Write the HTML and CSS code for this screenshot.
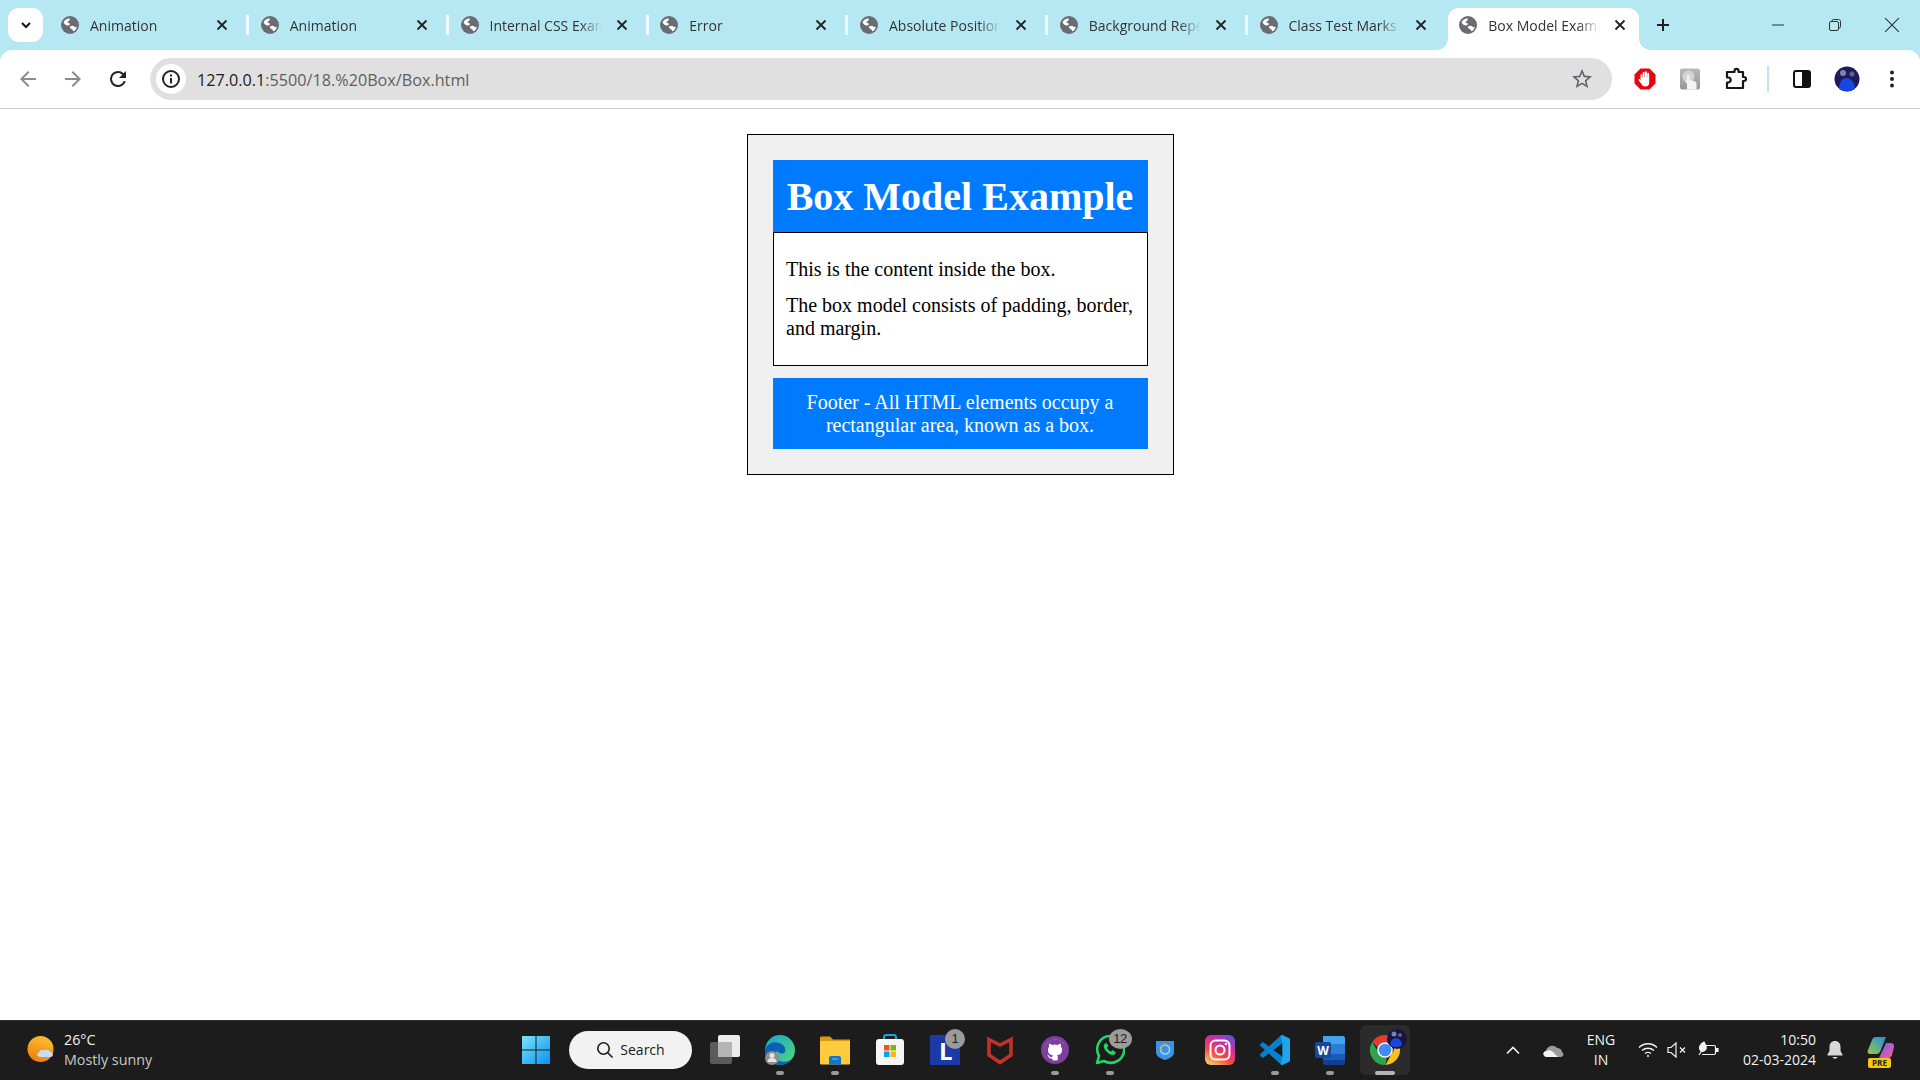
FILE: index.html
```html
<!DOCTYPE html>
<html>
<head>
  <title>Box Model Example</title>
  <link rel="stylesheet" href="styles.css">
</head>
<body>
  <svg class="defs">
    <symbol id="globe" viewBox="0 0 18 18">
      <circle cx="9" cy="9" r="9" fill="#696c70"/>
      <path d="M2.500 6.500C3.500 4 6 2.500 8.500 2.200 9 3.500 8.500 5 7 5.500 6 6 6.500 7 7.500 7c1.500 0 2 1.500 .5 2.200C6 10 4 9 2.500 6.500zM9 10.500c1.500-1.200 3.500-1 4.500.2 1 .8 1.800.3 2.300-.2-.2 2-1.300 3.800-3 4.800-1-.3-.8-1.500-1.800-2-1.200-.5-2.500-1.500-2-2.800z" fill="#fff"/>
    </symbol>
    <symbol id="close" viewBox="0 0 16 16">
      <path d="M3.500 3.500l9 9M12.500 3.500l-9 9"/>
    </symbol>
  </svg>

  <header class="browser">
    <div class="tabstrip">
      <button class="tab-search">
        <svg width="14" height="14" viewBox="0 0 14 14"><path d="M3 5l4 4 4-4" fill="none" stroke="#111" stroke-width="2"/></svg>
      </button>
      <div class="tabs">
        <div class="tab">
          <svg class="tab-icon"><use href="#globe"/></svg>
          <span class="tab-title">Animation</span>
          <svg class="tab-close"><use href="#close"/></svg>
        </div>
        <div class="tab">
          <svg class="tab-icon"><use href="#globe"/></svg>
          <span class="tab-title">Animation</span>
          <svg class="tab-close"><use href="#close"/></svg>
        </div>
        <div class="tab">
          <svg class="tab-icon"><use href="#globe"/></svg>
          <span class="tab-title">Internal CSS Example</span>
          <svg class="tab-close"><use href="#close"/></svg>
        </div>
        <div class="tab">
          <svg class="tab-icon"><use href="#globe"/></svg>
          <span class="tab-title">Error</span>
          <svg class="tab-close"><use href="#close"/></svg>
        </div>
        <div class="tab">
          <svg class="tab-icon"><use href="#globe"/></svg>
          <span class="tab-title">Absolute Positioning</span>
          <svg class="tab-close"><use href="#close"/></svg>
        </div>
        <div class="tab">
          <svg class="tab-icon"><use href="#globe"/></svg>
          <span class="tab-title">Background Repeat</span>
          <svg class="tab-close"><use href="#close"/></svg>
        </div>
        <div class="tab no-sep">
          <svg class="tab-icon"><use href="#globe"/></svg>
          <span class="tab-title">Class Test Marks</span>
          <svg class="tab-close"><use href="#close"/></svg>
        </div>
        <div class="tab active">
          <svg class="tab-icon"><use href="#globe"/></svg>
          <span class="tab-title">Box Model Example</span>
          <svg class="tab-close"><use href="#close"/></svg>
        </div>
      </div>
      <button class="new-tab">
        <svg width="16" height="16" viewBox="0 0 16 16"><path d="M8 2v12M2 8h12" stroke="#222" stroke-width="2"/></svg>
      </button>
      <div class="window-controls">
        <button class="win-btn"><svg width="14" height="14" viewBox="0 0 14 14"><path d="M1 7h12" stroke="#333" stroke-width="1"/></svg></button>
        <button class="win-btn"><svg width="14" height="14" viewBox="0 0 14 14" fill="none" stroke="#333"><rect x="1.500" y="3.500" width="9" height="9" rx="1.500"/><path d="M4 3.500V2.800c0-.7.500-1.300 1.300-1.300h5.400c1 0 1.800.8 1.800 1.800v5.400c0 .8-.6 1.300-1.300 1.300h-.7"/></svg></button>
        <button class="win-btn"><svg width="16" height="16" viewBox="0 0 14 14"><path d="M1 1l12 12M13 1L1 13" stroke="#333" stroke-width="1"/></svg></button>
      </div>
    </div>

    <div class="toolbar">
      <button class="tool-btn">
        <svg width="24" height="24" viewBox="0 0 24 24" fill="#8c8c8c"><path d="M20 11H7.830l5.590-5.590L12 4l-8 8 8 8 1.410-1.410L7.830 13H20v-2z"/></svg>
      </button>
      <button class="tool-btn">
        <svg width="24" height="24" viewBox="0 0 24 24" fill="#8c8c8c"><path d="M12 4l-1.410 1.410L16.170 11H4v2h12.170l-5.580 5.590L12 20l8-8z"/></svg>
      </button>
      <button class="tool-btn">
        <svg width="24" height="24" viewBox="0 0 24 24" fill="#222"><path d="M17.650 6.350A7.960 7.960 0 0 0 12 4a8 8 0 1 0 7.730 10h-2.080A6 6 0 1 1 12 6c1.660 0 3.140.690 4.220 1.780L13 11h7V4l-2.350 2.350z"/></svg>
      </button>
      <div class="omnibox">
        <span class="site-info">
          <svg width="20" height="20" viewBox="0 0 20 20"><circle cx="10" cy="10" r="8" fill="none" stroke="#222" stroke-width="2"/><path d="M10 9v5.500M10 5.500v2" stroke="#222" stroke-width="2"/></svg>
        </span>
        <span class="url"><span class="url-host">127.0.0.1</span>:5500/18.%20Box/Box.html</span>
        <svg class="star" width="24" height="24" viewBox="0 0 24 24" fill="#5f6368"><path d="M22 9.240l-7.190-.62L12 2 9.190 8.630 2 9.240l5.460 4.730L5.820 21 12 17.270 18.180 21l-1.630-7.030L22 9.240zM12 15.400l-3.760 2.270 1-4.280-3.320-2.880 4.380-.38L12 6.100l1.710 4.040 4.380.38-3.320 2.880 1 4.280L12 15.400z"/></svg>
      </div>
      <button class="tool-btn">
        <svg width="24" height="24" viewBox="0 0 24 24">
          <path d="M7.500 1.500h9l6 6v9l-6 6h-9l-6-6v-9z" fill="#e8060c"/>
          <path d="M8.500 11V8M10.700 11V5.800M13 11V5.200M15.200 11.500V6.800" stroke="#fff" stroke-width="1.900" stroke-linecap="round"/>
          <path d="M7.500 10.500h8.700v5c0 2.500-1.500 4-3.800 4-2 0-3-1-3.800-2.300L5.700 13.500c-.6-1.200.8-2 1.500-1l.6.800z" fill="#fff"/>
        </svg>
      </button>
      <button class="tool-btn">
        <svg width="24" height="24" viewBox="0 0 24 24">
          <defs><linearGradient id="gtile" x1="0" y1="0" x2="0" y2="1"><stop offset="0" stop-color="#b9b9b9"/><stop offset="1" stop-color="#979797"/></linearGradient></defs>
          <rect x="2" y="1.500" width="20" height="21" rx="2" fill="url(#gtile)"/>
          <circle cx="10.500" cy="9.500" r="6" fill="#d4d4d4"/>
          <path d="M9 22.500v-6l-1.500-1.500c-.8-1 .5-2 1.500-1V9c0-1.500 2.500-1.500 2.500 0v4l5 1.200c1.500.4 2 1.300 2 2.800v5.500z" fill="#f1f5f8"/>
        </svg>
      </button>
      <button class="tool-btn">
        <svg width="24" height="24" viewBox="0 0 24 24" fill="none" stroke="#161616" stroke-width="2.200" stroke-linejoin="round"><path d="M4 5h7.500V3.800a2 2 0 0 1 4 0V5H20v5h1a2 2 0 0 1 0 4h-1v7H4v-5.500h1.200a2.500 2.500 0 0 0 0-5H4z"/></svg>
      </button>
      <span class="tool-sep"></span>
      <button class="tool-btn">
        <svg width="24" height="24" viewBox="0 0 24 24"><rect x="4" y="4" width="16" height="16" rx="2" fill="none" stroke="#111" stroke-width="2"/><rect x="12" y="4" width="8" height="16" fill="#111"/></svg>
      </button>
      <button class="tool-btn">
        <svg width="26" height="26" viewBox="0 0 26 26"><circle cx="13" cy="13" r="12.500" fill="#1d1b5e"/><circle cx="9" cy="7" r="3" fill="#7d84b0"/><circle cx="18" cy="8" r="2.500" fill="#5c6290"/><path d="M5 23c0-6 3-11 7-11 5 0 9 5 9 11-4 3-12 3-16 0z" fill="#1746e0"/></svg>
      </button>
      <button class="tool-btn">
        <svg width="24" height="24" viewBox="0 0 24 24" fill="#222"><circle cx="12" cy="5.500" r="2"/><circle cx="12" cy="12" r="2"/><circle cx="12" cy="18.500" r="2"/></svg>
      </button>
    </div>
  </header>

  <main class="page">
    <div class="box">
      <div class="box-header"><h1>Box Model Example</h1></div>
      <div class="box-content">
        <p>This is the content inside the box.</p>
        <p>The box model consists of padding, border, and margin.</p>
      </div>
      <div class="box-footer">Footer - All HTML elements occupy a rectangular area, known as a box.</div>
    </div>
  </main>

  <footer class="taskbar">
    <div class="weather">
      <svg width="30" height="30" viewBox="0 0 30 30">
        <defs><linearGradient id="sun" x1="0.7" y1="0" x2="0.3" y2="1"><stop offset="0" stop-color="#fbc02d"/><stop offset="1" stop-color="#ee7d12"/></linearGradient></defs>
        <circle cx="13.500" cy="14" r="13" fill="url(#sun)"/>
        <path d="M13 22c-3 0-3.500-4-1-4.500.5-2.500 3.500-3.500 5.500-2 1-1.500 5-1 5.500 1.500 3.500 0 4 5 .5 5z" fill="#c9dcf5"/>
      </svg>
      <div class="weather-text">
        <span class="temp">26°C</span>
        <span class="sky">Mostly sunny</span>
      </div>
    </div>

    <button class="app start">
      <svg width="30" height="30" viewBox="0 0 30 30">
        <defs><linearGradient id="win" x1="0" y1="0" x2="1" y2="1"><stop offset="0" stop-color="#7ae5fb"/><stop offset="1" stop-color="#0b8ff2"/></linearGradient></defs>
        <path d="M1 1h13.500v13.500H1zM15.500 1H29v13.500H15.500zM1 15.500h13.500V29H1zM15.500 15.500H29V29H15.500z" fill="url(#win)"/>
      </svg>
    </button>
    <div class="search">
      <svg width="18" height="18" viewBox="0 0 18 18" fill="none" stroke="#1a1a1a" stroke-width="1.600"><circle cx="7.500" cy="7.500" r="5.700"/><path d="M11.500 11.500l5 5"/></svg>
      <span>Search</span>
    </div>

    <div class="apps">
      <button class="app">
        <svg width="32" height="32" viewBox="0 0 32 32"><rect x="1" y="8" width="22" height="22" rx="2" fill="#5b5b5b"/><rect x="9" y="1" width="22" height="22" rx="2" fill="#ececec"/><rect x="9" y="8" width="14" height="15" fill="#b5b5b5"/></svg>
      </button>
      <button class="app running">
        <svg width="32" height="32" viewBox="0 0 32 32">
          <defs><linearGradient id="edgetop" x1="0" y1="0" x2="1" y2="1"><stop offset="0" stop-color="#1aa0dc"/><stop offset="1" stop-color="#4fdc6d"/></linearGradient></defs>
          <circle cx="16" cy="16" r="15" fill="url(#edgetop)"/>
          <path d="M1 16c2-7 9-9 14-7 5 1 7 6 6 9-3 3-7 1-7-1-5 1-5 8 2 10 5 2 9 0 12-2-3 4-7 6-12 6-9 0-15-7-15-15z" fill="#0e5fb4"/>
          <circle cx="8" cy="24" r="7" fill="#8e8e8e"/><circle cx="8" cy="21.500" r="2.500" fill="#e4e4e4"/><path d="M3.500 28c0-3 2-4 4.500-4s4.500 1 4.500 4z" fill="#e4e4e4"/>
        </svg>
      </button>
      <button class="app running">
        <svg width="32" height="32" viewBox="0 0 32 32"><path d="M1 4c0-1 .5-1.500 1.500-1.500H11l3 3h17V12H1z" fill="#d99a0c"/><path d="M1 7h30v22c0 1-.5 1.500-1.500 1.500h-27C1.500 30.500 1 30 1 29z" fill="#fdcb3c"/><path d="M10 24c0-1 .5-2 2-2h8c1.500 0 2 1 2 2v6.500H10z" fill="#1277c8"/><path d="M13 25h6" stroke="#7fc0ee" stroke-width="1"/></svg>
      </button>
      <button class="app">
        <svg width="30" height="32" viewBox="0 0 30 32"><path d="M9 7V3.500C9 2 10 1 11 1h8c1 0 2 1 2 2.500V7" fill="none" stroke="#19a7e0" stroke-width="2"/><rect x="1" y="5" width="28" height="26" rx="3" fill="#f5f5f5"/><rect x="9" y="11" width="5.500" height="5.500" fill="#f25022"/><rect x="15.500" y="11" width="5.500" height="5.500" fill="#7fba00"/><rect x="9" y="17.500" width="5.500" height="5.500" fill="#00a4ef"/><rect x="15.500" y="17.500" width="5.500" height="5.500" fill="#ffb900"/></svg>
      </button>
      <button class="app">
        <svg width="30" height="30" viewBox="0 0 30 30"><rect width="30" height="30" fill="#1c39a8"/><text x="9" y="25" class="tile-letter">L</text></svg>
        <span class="badge">1</span>
      </button>
      <button class="app">
        <svg width="28" height="30" viewBox="0 0 28 30"><path d="M3 4.500L14 10 25 4.500V20L14 27.500 3 20z" fill="none" stroke="#c2312c" stroke-width="3.600"/></svg>
      </button>
      <button class="app running">
        <svg width="28" height="28" viewBox="0 0 28 28">
          <circle cx="14" cy="14" r="14" fill="#7d3f9e"/>
          <g transform="translate(3 3) scale(.92)">
            <circle cx="12" cy="12" r="11.500" fill="#fff"/>
            <path fill="#7d3f9e" d="M12 .3a12 12 0 0 0-3.800 23.400c.6.100.8-.3.800-.6v-2c-3.300.7-4-1.600-4-1.600-.6-1.400-1.400-1.800-1.400-1.800-1-.7.100-.7.100-.7 1.200 0 1.900 1.200 1.900 1.200 1 1.800 2.800 1.300 3.500 1 0-.8.400-1.300.7-1.600-2.700-.3-5.500-1.300-5.500-6 0-1.200.5-2.300 1.300-3.100-.2-.4-.6-1.600 0-3.200 0 0 1-.3 3.400 1.200a11.500 11.500 0 0 1 6 0c2.300-1.500 3.300-1.200 3.300-1.200.6 1.600.2 2.800 0 3.200.9.800 1.300 1.900 1.300 3.200 0 4.600-2.800 5.600-5.500 5.900.5.400.9 1 .9 2.200v3.300c0 .3.100.7.8.6A12 12 0 0 0 12 .3"/>
          </g>
        </svg>
      </button>
      <button class="app running">
        <svg width="30" height="30" viewBox="0 0 30 30"><path d="M2 28l2-7a13.500 13.500 0 1 1 5 5z" fill="none" stroke="#25d366" stroke-width="2.600" stroke-linejoin="round"/><path d="M10 8.500c-2 1.500-1.500 4.500 1 7.500 3 3.500 6 5 8.500 3.500l1.500-2-3.500-2.500-1.500 1.500c-1.500-.5-3.500-2.500-4-4l1.500-1.500-2-3z" fill="#25d366"/></svg>
        <span class="badge badge-wide">12</span>
      </button>
      <button class="app">
        <svg width="18" height="20" viewBox="0 0 18 20"><path d="M0 1h18v11c0 4-4 6.500-9 8-5-1.500-9-4-9-8z" fill="#3a94e3"/><circle cx="9" cy="9.500" r="4.500" fill="none" stroke="#9fd7f7" stroke-width="1.500"/><path d="M5 11a4.500 4.500 0 0 1 5-6" fill="none" stroke="#f2a23c" stroke-width="1.500"/></svg>
      </button>
      <button class="app">
        <svg width="30" height="30" viewBox="0 0 30 30">
          <defs><linearGradient id="insta" x1="0.2" y1="1" x2="0.8" y2="0"><stop offset="0" stop-color="#fdc468"/><stop offset="0.35" stop-color="#f5483e"/><stop offset="0.65" stop-color="#d32e9b"/><stop offset="1" stop-color="#6a50d3"/></linearGradient></defs>
          <rect width="30" height="30" rx="6" fill="url(#insta)"/>
          <rect x="5.500" y="5.500" width="19" height="19" rx="5" fill="none" stroke="#fff" stroke-width="2"/>
          <circle cx="15" cy="15" r="4.500" fill="none" stroke="#fff" stroke-width="2"/>
          <circle cx="21" cy="9" r="1.300" fill="#fff"/>
        </svg>
      </button>
      <button class="app running">
        <svg width="30" height="30" viewBox="0 0 24 24"><path fill="#0a7fcc" d="M23.150 2.587L18.210.21a1.494 1.494 0 0 0-1.705.29l-9.460 8.630-4.120-3.128a.999.999 0 0 0-1.276.057L.327 7.261A1 1 0 0 0 .326 8.740L3.899 12 .326 15.260a1 1 0 0 0 .001 1.479L1.650 17.940a.999.999 0 0 0 1.276.057l4.120-3.128 9.460 8.630a1.492 1.492 0 0 0 1.704.29l4.942-2.377A1.500 1.500 0 0 0 24 20.060V3.939a1.500 1.500 0 0 0-.85-1.352zm-5.146 14.861L10.826 12l7.178-5.448v10.896z"/><path fill="#1fa5ee" d="M18 .1c-.5-.1-1 .1-1.500.4L18 6.550v10.900L16.500 23.500c.5.300 1.100.4 1.700.3l4.950-2.400A1.500 1.500 0 0 0 24 20.060V3.940a1.500 1.500 0 0 0-.85-1.350z"/></svg>
      </button>
      <button class="app running">
        <svg width="30" height="30" viewBox="0 0 30 30"><path d="M8 1h20c1 0 2 1 2 2v6H8z" fill="#41a5ee"/><rect x="8" y="9" width="22" height="10" fill="#2b7cd3"/><rect x="8" y="19" width="22" height="10" fill="#185abd"/><path d="M8 25h22v3c0 1-1 2-2 2H10c-1 0-2-1-2-2z" fill="#103f91"/><rect y="7" width="16" height="16" rx="2" fill="#134a9e"/><text x="8" y="20" class="word-letter">W</text></svg>
      </button>
      <button class="app running current">
        <svg width="30" height="30" viewBox="0 0 30 30">
          <path d="M15 0a15 15 0 0 1 13 7.500H15a7.500 7.500 0 0 0-7 4.700L2.300 7A15 15 0 0 1 15 0z" fill="#e33b2e"/>
          <path d="M28 7.500A15 15 0 0 1 15.500 30l6-11a7.500 7.500 0 0 0 0-11.500z" fill="#fbc116"/>
          <path d="M2.300 7L8.500 18a7.500 7.500 0 0 0 8 4.500L15.500 30A15 15 0 0 1 2.300 7z" fill="#2fa44f"/>
          <circle cx="15" cy="15" r="7.800" fill="#fff"/>
          <circle cx="15" cy="15" r="6.300" fill="#4489f4"/>
        </svg>
        <svg class="chrome-avatar" width="20" height="20" viewBox="0 0 20 20"><circle cx="10" cy="10" r="10" fill="#16143f"/><circle cx="7" cy="5" r="2.500" fill="#7d84b0"/><circle cx="13" cy="6" r="2" fill="#5c6290"/><path d="M3 16c0-4 3-7 6-7 3 0 6 3 6 7-3 3-9 3-12 0z" fill="#1746e0"/></svg>
      </button>
    </div>

    <div class="tray">
      <span class="tray-item chevron">
        <svg width="16" height="16" viewBox="0 0 16 16"><path d="M2 11.500L8 5.500l6 6" fill="none" stroke="#f2f2f2" stroke-width="1.600"/></svg>
      </span>
      <span class="tray-item onedrive">
        <svg width="22" height="14" viewBox="0 0 22 14"><path d="M5 14C1 14 0 9 4 8c1-5 8-7 11-3 3 0 5 2 5 4 2 1 2 5-1 5z" fill="#9a9a9a"/><path d="M5 14C1 14 0 9 4 8c2-1 5-1 7 1l5 5z" fill="#f2f2f2"/></svg>
      </span>
      <span class="tray-item lang">ENG<br>IN</span>
      <span class="tray-item wifi">
        <svg width="20" height="16" viewBox="0 0 20 16" fill="none" stroke="#f2f2f2" stroke-width="1.400"><path d="M1 5.500c5-5 13-5 18 0M4 8.500c3.500-3 8.500-3 12 0M7 11.500c2-1.500 4-1.500 6 0"/><circle cx="10" cy="14" r="1" fill="#f2f2f2" stroke="none"/></svg>
      </span>
      <span class="tray-item speaker">
        <svg width="20" height="16" viewBox="0 0 20 16" fill="none" stroke="#f2f2f2" stroke-width="1.200"><path d="M1 5.500h3L9 1v14l-5-4.500H1z"/><path d="M13 5.500l5 5M18 5.500l-5 5"/></svg>
      </span>
      <span class="tray-item battery">
        <svg width="22" height="18" viewBox="0 0 22 18" fill="none" stroke="#f2f2f2" stroke-width="1.200"><path d="M9 4.500h8c1 0 1.500.5 1.500 1.500v6c0 1-.5 1.500-1.500 1.500H5"/><path d="M19 7.500h2v3h-2z" fill="#f2f2f2"/><path d="M7 1C3 3 1 7 4 10c3 1 6-1 5-5z" fill="#f2f2f2"/><path d="M2 14l4-6"/></svg>
      </span>
      <span class="tray-item clock">10:50<br>02-03-2024</span>
      <span class="tray-item bell">
        <svg width="18" height="20" viewBox="0 0 18 20"><path d="M9 1c-3.500 0-5.500 2.500-5.500 6v4L1.500 14.500c-.3.700 0 1 .7 1h13.600c.7 0 1-.3.700-1L14.500 11V7c0-3.500-2-6-5.500-6z" fill="#d8d8d8"/><path d="M6.500 17h5c-.5 2.300-4.500 2.300-5 0z" fill="#d8d8d8"/></svg>
      </span>
      <span class="tray-item copilot">
        <svg width="30" height="28" viewBox="0 0 30 28">
          <defs>
            <linearGradient id="cop1" x1="0" y1="1" x2="1" y2="0"><stop offset="0" stop-color="#9bc83c"/><stop offset="1" stop-color="#1c8fe8"/></linearGradient>
            <linearGradient id="cop2" x1="0" y1="0" x2="1" y2="1"><stop offset="0" stop-color="#7b5be8"/><stop offset="1" stop-color="#f2609c"/></linearGradient>
          </defs>
          <path d="M10 1h10l-5.500 14c-1 2-2 3-4 3H4c-2 0-3-2-2-4l4-10c.7-2 2-3 4-3z" fill="url(#cop1)"/>
          <path d="M20 7h5c2 0 3.500 2 3 4l-2 8c-.5 2-2 3-4 3h-9z" fill="url(#cop2)"/>
        </svg>
        <span class="pre">PRE</span>
      </span>
    </div>
  </footer>
</body>
</html>
```

FILE: styles.css
```css
* {
  box-sizing: border-box;
}

body {
  display: flex;
  flex-direction: column;
  height: 100vh;
  margin: 0;
  background: #fff;
  font-family: "Liberation Serif", serif;
  overflow: hidden;
}

button {
  display: flex;
  justify-content: center;
  align-items: center;
  padding: 0;
  border: none;
  background: none;
}

.defs {
  display: none;
}

/* browser chrome */
.browser {
  background: #b6e8f4;
  font-family: "Open Sans", sans-serif;
}

.tabstrip {
  display: flex;
  height: 50px;
  padding-left: 8px;
}

.tab-search {
  flex: none;
  width: 35px;
  height: 34px;
  margin-top: 8px;
  margin-right: 7px;
  background: #fff;
  border-radius: 11px;
}

.tabs {
  display: flex;
}

.tab {
  position: relative;
  display: flex;
  align-items: center;
  width: 199.750px;
  height: 42px;
  margin-top: 8px;
  padding: 0 0 8px 11px;
}

.tab::after {
  content: "";
  position: absolute;
  left: 196px;
  top: 7px;
  width: 3px;
  height: 20px;
  background: #eefaff;
}

.tab.no-sep::after {
  display: none;
}

.tab.active {
  width: 191px;
  margin-right: 9px;
  background: #fff;
  border-radius: 11px 11px 0 0;
}

.tab.active::before,
.tab.active::after {
  content: "";
  position: absolute;
  top: auto;
  bottom: 0;
  width: 11px;
  height: 11px;
}

.tab.active::before {
  left: -11px;
  background: radial-gradient(circle at 0 0, transparent 10.500px, #fff 11px);
}

.tab.active::after {
  left: 191px;
  background: radial-gradient(circle at 100% 0, transparent 10.500px, #fff 11px);
}

.tab-icon {
  flex: none;
  width: 18px;
  height: 18px;
}

.tab-title {
  flex: none;
  width: 112px;
  margin-left: 11px;
  overflow: hidden;
  font-size: 14px;
  color: #333;
  white-space: nowrap;
  -webkit-mask-image: linear-gradient(to right, #000 90px, transparent 112px);
  mask-image: linear-gradient(to right, #000 90px, transparent 112px);
}

.tab-close {
  flex: none;
  width: 16px;
  height: 16px;
  margin-left: 12px;
  fill: none;
  stroke: #222;
  stroke-width: 1.800;
}

.new-tab {
  flex: none;
  width: 30px;
  height: 50px;
}

.window-controls {
  display: flex;
  margin-left: auto;
}

.win-btn {
  width: 57px;
  height: 50px;
}

.toolbar {
  display: flex;
  align-items: center;
  height: 59px;
  padding: 0 6px 1px 5px;
  background: #fff;
  border-bottom: 1px solid #cfcfcf;
  border-radius: 12px 12px 0 0;
}

.tool-btn {
  flex: none;
  width: 45px;
  height: 42px;
}

.tool-sep {
  flex: none;
  width: 2px;
  height: 26px;
  margin: 0 10px;
  background: #b6e8f4;
}

.omnibox {
  display: flex;
  flex: 1;
  align-items: center;
  height: 42px;
  margin: 0 10px;
  padding: 0 18px 0 6px;
  background: #e0e0e0;
  border-radius: 21px;
}

.site-info {
  display: flex;
  justify-content: center;
  align-items: center;
  width: 30px;
  height: 30px;
  background: #fff;
  border-radius: 50%;
}

.url {
  margin-left: 11px;
  padding-top: 2px;
  font-size: 16.200px;
  color: #5f5f5f;
}

.url-host {
  color: #1c1c1c;
}

.star {
  margin-left: auto;
}

/* the page itself */
.page {
  flex: 1;
  padding-top: 25px;
}

.box {
  width: 427px;
  margin: 0 auto;
  padding: 25px;
  background: #f0f0f0;
  border: 1px solid #000;
}

.box-header {
  padding: 12.500px;
  background: #007bff;
  color: #fff;
  text-align: center;
}

.box-header h1 {
  margin: 0;
  font-size: 40px;
}

.box-content {
  margin-bottom: 12.500px;
  padding: 12.500px;
  background: #fff;
  border: 1px solid #000;
  font-size: 20px;
}

.box-content p {
  margin: 12.500px 0;
}

.box-footer {
  padding: 12.500px;
  background: #007bff;
  color: #fff;
  font-size: 20px;
  text-align: center;
}

/* windows taskbar */
.taskbar {
  display: flex;
  align-items: center;
  flex: none;
  height: 60px;
  padding-bottom: 2px;
  background: #1c1c1c;
  border-top: 1px solid #333;
  font-family: "Open Sans", sans-serif;
  color: #f2f2f2;
}

.weather {
  display: flex;
  align-items: center;
  width: 508px;
  padding-left: 27px;
}

.weather-text {
  display: flex;
  flex-direction: column;
  margin-left: 7px;
  font-size: 14.300px;
  line-height: 20px;
}

.sky {
  color: #c8c8c8;
}

.app {
  position: relative;
  flex: none;
  width: 55px;
  height: 50px;
}

.app.running::after {
  content: "";
  position: absolute;
  left: 23.500px;
  bottom: 0;
  width: 8px;
  height: 4px;
  background: #9a9a9a;
  border-radius: 2px;
}

.app.current {
  width: 50px;
  margin: 0 2.500px;
  background: #2b2b2b;
  border-radius: 6px;
}

.app.current::after {
  left: 15px;
  width: 20px;
  background: #b5b5b5;
}

.search {
  display: flex;
  align-items: center;
  justify-content: center;
  flex: none;
  gap: 6px;
  width: 123px;
  height: 38px;
  margin-left: 6px;
  background: #f2f2f2;
  border-radius: 19px;
  font-size: 14px;
  color: #1a1a1a;
}

.apps {
  display: flex;
  margin-left: 5.500px;
}

.badge {
  position: absolute;
  left: 27.500px;
  top: 4px;
  width: 20px;
  height: 20px;
  background: #9b9b9b;
  border-radius: 50%;
  font-size: 13px;
  line-height: 20px;
  color: #222;
  text-align: center;
}

.badge-wide {
  left: 26px;
  width: 23px;
  letter-spacing: -0.500px;
}

.tile-letter {
  font: bold 24px "Open Sans", sans-serif;
  fill: #fff;
}

.word-letter {
  font: bold 12px "Open Sans", sans-serif;
  fill: #fff;
  text-anchor: middle;
}

.chrome-avatar {
  position: absolute;
  left: 27px;
  top: 4px;
}

.tray {
  display: flex;
  align-items: center;
  margin-left: auto;
  padding-right: 12px;
}

.tray-item {
  position: relative;
  display: flex;
  justify-content: center;
  align-items: center;
  flex: none;
  height: 50px;
}

.chevron { width: 40px; }
.onedrive { width: 40px; }
.wifi { width: 38px; }
.speaker { width: 20px; }
.battery { width: 42px; }
.bell { width: 38px; }
.copilot { width: 54px; }

.lang {
  width: 56px;
  font-size: 14px;
  line-height: 20px;
  text-align: center;
}

.clock {
  width: 87px;
  font-size: 14px;
  line-height: 20px;
  text-align: right;
  justify-content: flex-end;
}

.pre {
  position: absolute;
  left: 14px;
  bottom: 7px;
  width: 23px;
  height: 10px;
  background: #f9c513;
  border-radius: 2px;
  font-size: 8px;
  font-weight: 700;
  line-height: 10px;
  color: #222;
  text-align: center;
}
```
